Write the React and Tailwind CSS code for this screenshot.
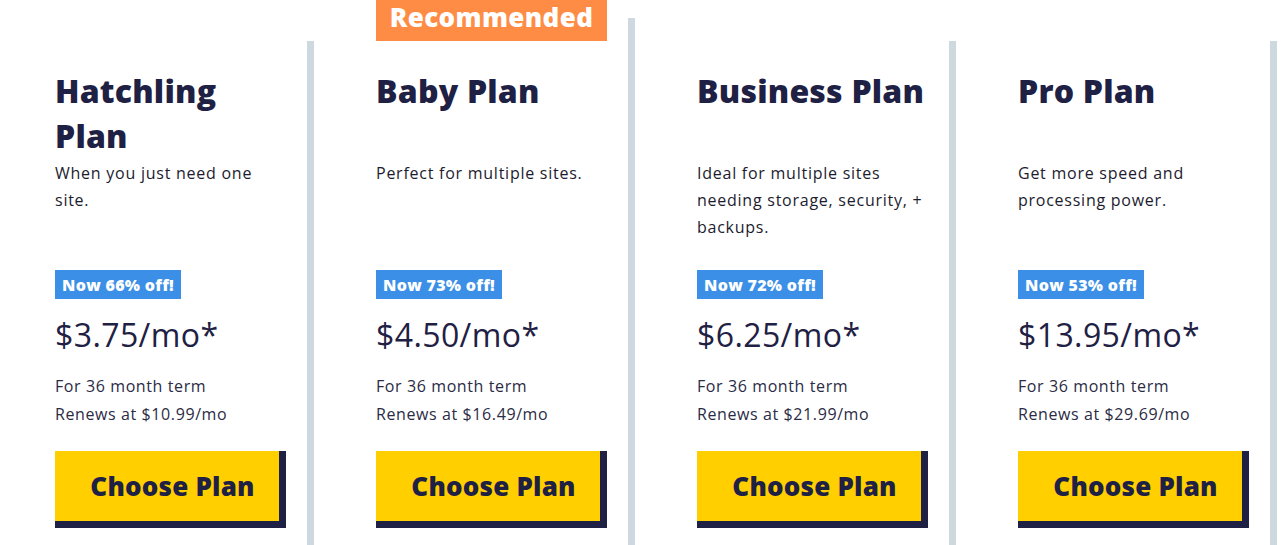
const plans = [
  {
    name: "Hatchling Plan",
    desc: "When you just need one site.",
    off: "Now 66% off!",
    price: "$3.75/mo*",
    renew: "Renews at $10.99/mo",
  },
  {
    name: "Baby Plan",
    desc: "Perfect for multiple sites.",
    off: "Now 73% off!",
    price: "$4.50/mo*",
    renew: "Renews at $16.49/mo",
    recommended: true,
  },
  {
    name: "Business Plan",
    desc: "Ideal for multiple sites needing storage, security, + backups.",
    off: "Now 72% off!",
    price: "$6.25/mo*",
    renew: "Renews at $21.99/mo",
  },
  {
    name: "Pro Plan",
    desc: "Get more speed and processing power.",
    off: "Now 53% off!",
    price: "$13.95/mo*",
    renew: "Renews at $29.69/mo",
  },
];

function PlanCard({ plan, first }) {
  return (
    <div
      className={`relative shrink-0 border-r-[7px] border-[#cdd8df] ${
        first ? "w-[314px] pl-[55px]" : "w-[321px] pl-[62px]"
      } ${plan.recommended ? "mt-[18px] pt-[50px]" : "mt-[41px] pt-[27px]"}`}
    >
      {plan.recommended && (
        <div className="absolute top-[-18px] h-[41px] w-[231px] bg-[#ff8c44] text-white text-[26px] font-extrabold tracking-[0.4px] flex justify-center leading-[34px]">
          Recommended
        </div>
      )}
      <div className="w-[231px]">
        <h3 className="text-[32px] leading-[45px] font-extrabold tracking-[0.2px] text-[#1f2144] min-h-[90px]">
          {plan.name}
        </h3>
        <p className="mt-[2px] text-[16px] leading-[27px] tracking-[0.75px] text-[#1c1c2e] min-h-[81px] w-[231px]">
          {plan.desc}
        </p>
        <div className="mt-[29px] inline-flex h-[29px] items-center bg-[#3b8fe6] px-[7px] text-[16px] font-extrabold tracking-[0.3px] text-white">
          {plan.off}
        </div>
        <div className="mt-[16px] text-[32px] leading-[40px] font-normal tracking-[0.4px] text-[#1f2144]">
          {plan.price}
        </div>
        <div className="mt-[17px] text-[16px] leading-[28px] tracking-[0.6px] text-[#2b2b45]">
          <div>For 36 month term</div>
          <div>{plan.renew}</div>
        </div>
        <button className="mt-[23px] flex h-[77px] w-[231px] items-center justify-center pl-[11px] bg-[#ffcf00] border-r-[7px] border-b-[7px] border-[#1f2144] text-[26px] font-extrabold tracking-[0.2px] text-[#1f2144]">
          Choose Plan
        </button>
      </div>
    </div>
  );
}

export default function App() {
  return (
    <div className="flex h-[545px] w-[1288px] overflow-hidden bg-white font-['Open_Sans',sans-serif]">
      {plans.map((p, i) => (
        <PlanCard key={p.name} plan={p} first={i === 0} />
      ))}
    </div>
  );
}
